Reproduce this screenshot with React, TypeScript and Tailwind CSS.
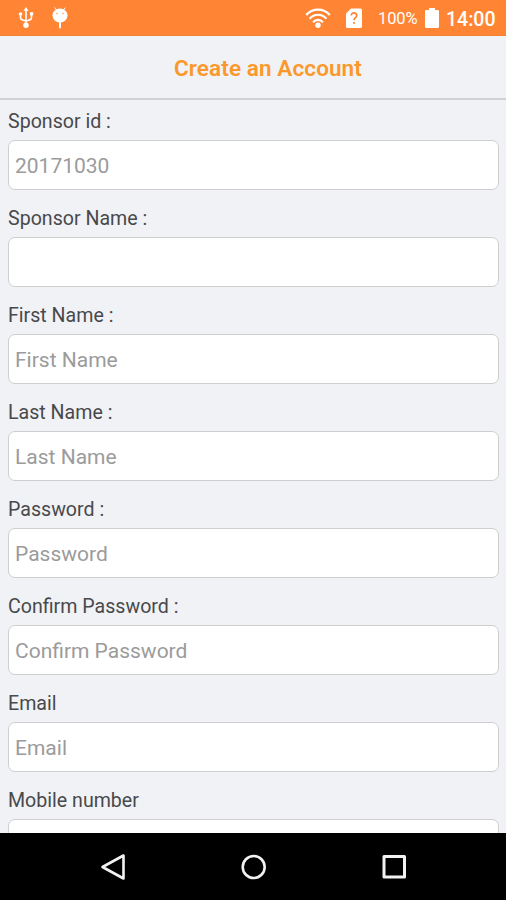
import React from "react";

const fields = [
  { label: "Sponsor id :", placeholder: "20171030", type: "text" },
  { label: "Sponsor Name :", placeholder: "", type: "text" },
  { label: "First Name :", placeholder: "First Name", type: "text" },
  { label: "Last Name :", placeholder: "Last Name", type: "text" },
  { label: "Password :", placeholder: "Password", type: "password" },
  { label: "Confirm Password :", placeholder: "Confirm Password", type: "password" },
  { label: "Email", placeholder: "Email", type: "email" },
  { label: "Mobile number", placeholder: "", type: "tel" },
];

const UsbIcon = () => (
  <svg width="16" height="22" viewBox="0 0 16 22" fill="none" stroke="#fff" strokeWidth="1.6">
    <path d="M8 3v15M2.500 7v3.500q0 2 2 2.500L8 14M13.500 7v3.500q0 2-2 2.500L8 14" />
    <path d="M8 0l2.500 3.800h-5z" fill="#fff" stroke="none" />
    <circle cx="2.500" cy="7" r="1.800" fill="#fff" stroke="none" />
    <path d="M12 5.200h3.200v3.200H12z" fill="#fff" stroke="none" />
    <circle cx="8" cy="18.300" r="2.700" fill="#fff" stroke="none" />
  </svg>
);

const DebugIcon = () => (
  <svg width="16" height="22" viewBox="0 0 16 22" fill="#fff">
    <path d="M2.500 0.500l2.500 3M13.500 0.500l-2.500 3" stroke="#fff" strokeWidth="1" />
    <ellipse cx="8" cy="8.500" rx="7.500" ry="7" />
    <path d="M7 14h2v6.500a1 1 0 0 1-2 0z" />
    <circle cx="5" cy="6.500" r="0.900" fill="#ffb98f" />
    <circle cx="11" cy="6.500" r="0.900" fill="#ffb98f" />
  </svg>
);

const WifiIcon = () => (
  <svg width="26" height="21" viewBox="0 0 26 21" fill="none" stroke="#fff" strokeWidth="2.2">
    <path d="M1.200 7C7.500-.3 18.500-.3 24.800 7" />
    <path d="M4.600 10.800c4.700-5.400 12.100-5.400 16.800 0" />
    <path d="M8 14.400c2.900-3.500 7.100-3.500 10 0" />
    <circle cx="13" cy="17.300" r="2.700" fill="#fff" stroke="none" />
  </svg>
);

const SimIcon = () => (
  <svg width="16" height="20" viewBox="0 0 16 20" fill="none">
    <path d="M5 .5h9.500A1.500 1.500 0 0 1 16 2v16.500a1.500 1.500 0 0 1-1.500 1.500h-13A1.500 1.500 0 0 1 0 18.500V5.500z" fill="#fff" />
    <path d="M5.300 7.500c0-3.600 5.400-3.500 5.400 0 0 2.100-2.700 2.200-2.700 4.700" stroke="#ff8534" strokeWidth="1.700" />
    <path d="M7.100 14h1.800v1.800H7.100z" fill="#ff8534" />
  </svg>
);

const BatteryIcon = () => (
  <svg width="14" height="20" viewBox="0 0 14 20" fill="#fff">
    <path d="M4 0h6v2h2.800A1.200 1.200 0 0 1 14 3.200v15.300a1.500 1.500 0 0 1-1.500 1.500h-11A1.500 1.500 0 0 1 0 18.500V3.200A1.200 1.200 0 0 1 1.200 2H4z" />
  </svg>
);

const StatusBar = () => (
  <div className="flex h-9 shrink-0 items-center border-b border-[#f08232] bg-[#ff8534] pl-[18px] pr-[11px] pt-px text-white">
    <UsbIcon />
    <div className="ml-[18px]">
      <DebugIcon />
    </div>
    <div className="ml-auto flex items-center">
      <WifiIcon />
      <div className="ml-[15px]">
        <SimIcon />
      </div>
      <span className="ml-4 w-[40px] whitespace-nowrap pt-[2px] text-[16.5px] leading-none tracking-[-0.1px]">100%</span>
      <div className="ml-[7px]">
        <BatteryIcon />
      </div>
      <span className="ml-[7px] w-[49px] whitespace-nowrap pt-[3px] text-[19.5px] font-medium leading-none">14:00</span>
    </div>
  </div>
);

const NavigationBar = () => (
  <nav className="flex h-[67px] shrink-0 items-center bg-black pl-[100px]">
    <button aria-label="Back">
      <svg width="26" height="28" viewBox="0 0 26 28" fill="none" stroke="#f2f2f2" strokeWidth="2.600" strokeLinejoin="round">
        <path d="M23.500 2.500v23L2.500 14z" />
      </svg>
    </button>
    <button aria-label="Home" className="ml-[115px]">
      <svg width="26" height="26" viewBox="0 0 26 26" fill="none" stroke="#f2f2f2" strokeWidth="2.600">
        <circle cx="12.700" cy="13" r="11" />
      </svg>
    </button>
    <button aria-label="Recent apps" className="ml-[114px]">
      <svg width="26" height="26" viewBox="0 0 26 26" fill="none" stroke="#f2f2f2" strokeWidth="3" strokeLinejoin="round">
        <path d="M3 2.500h20.500v20.500H3z" />
      </svg>
    </button>
  </nav>
);

const App = () => {
  return (
    <div className="flex h-[900px] w-[506px] flex-col overflow-hidden bg-[#f1f2f6] font-['Roboto',sans-serif]">
      <StatusBar />

      <header className="flex h-16 shrink-0 items-center justify-center border-b-2 border-[#d0d1d5] pl-[30px] pt-[3px]">
        <h1 className="text-[22.5px] font-semibold leading-none tracking-[0.1px] text-[#fb9829]">
          Create an Account
        </h1>
      </header>

      {/* signup form */}
      <form className="min-h-0 flex-1 overflow-hidden pl-2 pr-[7px]">
        {fields.map(({ label, placeholder, type }) => (
          <label key={label} className="block h-[97px]">
            <span className="flex h-10 items-center pt-1 text-[19.6px] leading-none text-[#48494b]">
              {label}
            </span>
            <input
              type={type}
              placeholder={placeholder}
              className="block h-[50px] w-full rounded-[7px] border border-[#cfcfcf] bg-white px-[6px] pt-[2px] text-[21px] text-[#999] outline-none placeholder:text-[#9b9b9b]"
            />
          </label>
        ))}
      </form>

      <NavigationBar />
    </div>
  );
};

export default App;
